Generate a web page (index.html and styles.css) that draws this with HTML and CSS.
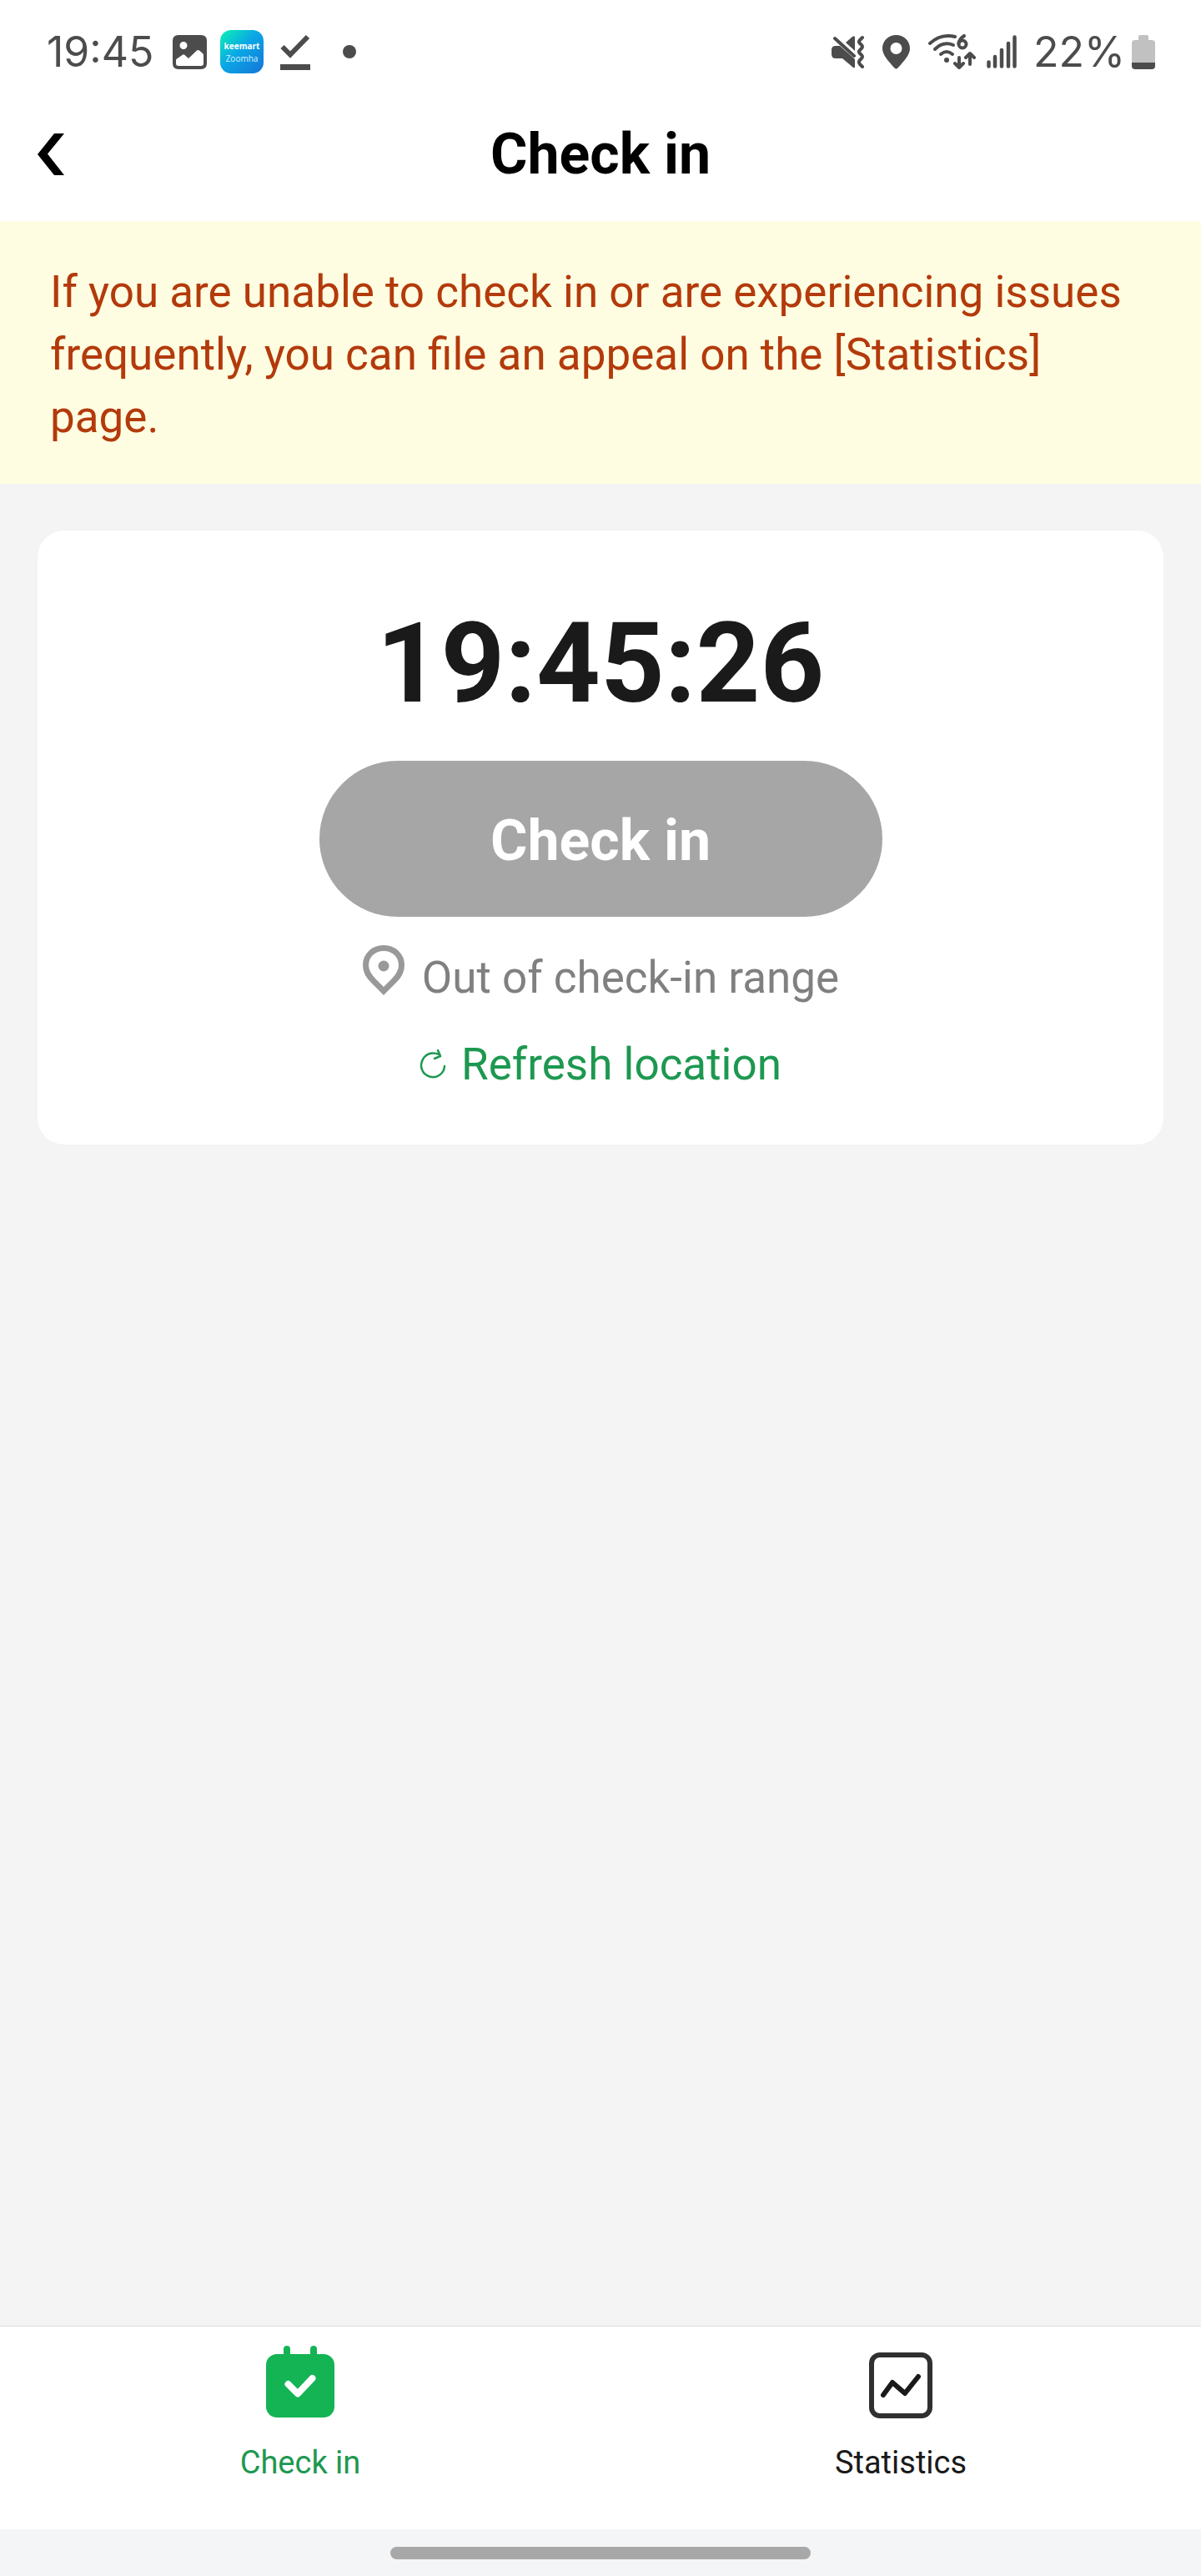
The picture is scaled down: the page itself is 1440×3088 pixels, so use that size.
FILE: index.html
```
<!DOCTYPE html>
<html lang="en">
<head>
    <meta charset="UTF-8">
    <meta name="viewport" content="width=device-width, initial-scale=1.0">
    <title>Check in</title>
    <link rel="stylesheet" href="styles.css">
</head>
<body>

<div class="status-bar">
	<div class="status-left">
		<span class="status-time">19:45</span>
		<svg class="icon-gallery" width="41" height="41" viewBox="0 0 41 41">
			<path fill="#4c4c4c" fill-rule="evenodd" d="M7 0H34Q41 0 41 7V34Q41 41 34 41H7Q0 41 0 34V7Q0 0 7 0ZM13 8a4.5 4.5 0 1 0 0 9a4.5 4.5 0 1 0 0-9ZM4 30V34Q4 37 7 37H34Q37 37 37 34V24Q37 23 36 22L32 18.500Q30.500 17.500 29 18.500L19 28L14.500 24Q13 22.500 11.500 24L5 28.500Q4 29 4 30Z"/>
		</svg>
		<svg class="icon-app" width="52" height="52" viewBox="0 0 52 52">
			<defs>
				<linearGradient id="app-bg" x1="0" y1="0" x2="1" y2="1">
					<stop offset="0" stop-color="#0df2b4"/>
					<stop offset="0.45" stop-color="#0aa8e6"/>
					<stop offset="1" stop-color="#1474d6"/>
				</linearGradient>
			</defs>
			<rect width="52" height="52" rx="13" fill="url(#app-bg)"/>
			<text class="app-name" x="26" y="23" text-anchor="middle">keemart</text>
			<text class="app-city" x="26" y="38" text-anchor="middle">Zoomha</text>
		</svg>
		<svg class="icon-done" width="36" height="43" viewBox="0 0 36 43">
			<path d="M2.500 15L12 24.500L33 3" fill="none" stroke="#4c4c4c" stroke-width="6"/>
			<rect y="36" width="36" height="7" fill="#4c4c4c"/>
		</svg>
		<span class="dot"></span>
	</div>
	<div class="status-right">
		<svg class="icon-mute" width="40" height="40" viewBox="0 0 40 40">
			<path fill="#4c4c4c" d="M5 13H10L28 29V38Q28 40 26 39L13 28H5Q0 28 0 23V18Q0 13 5 13ZM17 9L25 2Q28 0 28 3V19Z"/>
			<path d="M4 4L27 25" stroke="#4c4c4c" stroke-width="4" stroke-linecap="round"/>
			<path d="M37 3L34 6Q32 8 34 10L36 12Q38 14 36 16L34 18Q32 20 34 22L36 24Q38 26 36 28L34 30Q32 32 34 35L37 38" fill="none" stroke="#4c4c4c" stroke-width="4" stroke-linecap="round"/>
		</svg>
		<svg class="icon-pin" width="33" height="41" viewBox="0 0 33 41">
			<path fill="#4c4c4c" fill-rule="evenodd" d="M16.500 0C26 0 33 7 33 16C33 24 26 31 18.500 39.500Q16.500 41.500 14.500 39.500C7 31 0 24 0 16C0 7 7 0 16.500 0ZM16.500 9a7 7 0 1 0 0 14a7 7 0 1 0 0-14Z"/>
		</svg>
		<svg class="icon-wifi" width="57" height="42" viewBox="0 0 57 42">
			<g fill="none" stroke="#4c4c4c" stroke-width="4" stroke-linecap="round" stroke-linejoin="round">
				<path d="M2 11Q15 -1 32 3"/>
				<path d="M8 18Q18 8 30 13"/>
				<path d="M15 24Q22 18 29 24"/>
				<path d="M43 2Q37 6 36.500 11"/>
				<circle cx="41" cy="12" r="4.500"/>
				<path d="M37 28V39M32 35L37 40L42 35" />
				<path d="M50 36V24M45 28L50 23L55 28"/>
			</g>
			<circle cx="22" cy="31" r="3" fill="#4c4c4c"/>
		</svg>
		<svg class="icon-signal" width="36" height="40" viewBox="0 0 36 40">
			<path d="M2.500 32.500V37.500M10 26V37.500M18 18V37.500M26 10V37.500M33.500 2.500V37.500" stroke="#4c4c4c" stroke-width="4.500" stroke-linecap="round"/>
		</svg>
		<span class="status-percent">22%</span>
		<svg class="icon-battery" width="28" height="41" viewBox="0 0 28 41">
			<path fill="#c1c1c1" d="M8 6V2Q8 0 10 0H18Q20 0 20 2V6H24Q28 6 28 10V33H0V10Q0 6 4 6Z"/>
			<path fill="#4c4c4c" d="M0 33H28V37Q28 41 24 41H4Q0 41 0 37Z"/>
		</svg>
	</div>
</div>

<header class="header">
	<button class="back-btn" type="button" aria-label="Back">
		<svg width="32" height="50" viewBox="0 0 32 50">
			<path d="M20 0H32L12 24.500L32 50H20L0 25Z"/>
		</svg>
	</button>
	<h1 class="title">Check in</h1>
</header>

<p class="notice">If you are unable to check in or are experiencing issues frequently, you can file an appeal on the [Statistics] page.</p>

<main class="main">
	<section class="card">
		<time class="clock">19:45:26</time>
		<button class="check-btn" type="button" disabled>Check in</button>
		<p class="range-text">
			<svg class="range-icon" width="52" height="62" viewBox="0 0 52 62">
				<path d="M26 4.500C38 4.500 47.500 13 47.500 25C47.500 33 44 38 38 44L26 56L14 44C8 38 4.500 33 4.500 25C4.500 13 14 4.500 26 4.500Z" fill="none" stroke="#999" stroke-width="7"/>
				<circle cx="26" cy="26" r="6.500" fill="#999"/>
			</svg>
			Out of check-in range
		</p>
		<button class="refresh-btn" type="button">
			<svg class="refresh-icon" width="32" height="36" viewBox="0 0 32 36" fill="none" stroke="#1d9850" stroke-width="2.500" stroke-linecap="round" stroke-linejoin="round">
				<path d="M24 6Q10 1 4 12A14 14 0 1 0 30 20"/>
				<path d="M22 1L25 8L18 11"/>
			</svg>
			Refresh location
		</button>
	</section>
</main>

<nav class="tab-bar">
	<a class="tab tab-active" href="#checkin">
		<svg width="88" height="96" viewBox="0 0 88 96">
			<path d="M28 11V24M60 11V24" stroke="#14b455" stroke-width="8" stroke-linecap="round"/>
			<rect x="3" y="17" width="82" height="76" rx="13" fill="#14b455"/>
			<path d="M29.500 53L41 64.500L58.500 46" fill="none" stroke="#fff" stroke-width="8" stroke-linecap="round" stroke-linejoin="round"/>
		</svg>
		<span>Check in</span>
	</a>
	<a class="tab" href="#statistics">
		<svg width="88" height="96" viewBox="0 0 88 96" fill="none">
			<rect x="9" y="18" width="70" height="73" rx="10" stroke="#303030" stroke-width="6"/>
			<path d="M23 66L34 51L49 64L65 44" stroke="#1a1a1a" stroke-width="6" stroke-linecap="round" stroke-linejoin="round"/>
		</svg>
		<span>Statistics</span>
	</a>
</nav>

<div class="gesture-bar">
	<span class="gesture-handle"></span>
</div>

</body>
</html>
```
FILE: styles.css
```
*{
	padding: 0;
	margin: 0;
	box-sizing: border-box;
}

body{
	font-family: Roboto, "Liberation Sans", sans-serif;
	background-color: #f4f4f4;
	color: #1a1a1a;
	min-height: 100vh;
	display: flex;
	flex-direction: column;
}

svg{
	display: block;
	flex-shrink: 0;
}

button{
	font-family: inherit;
	border: none;
	background: none;
}

/* phone status bar */
.status-bar{
	height: 124px;
	padding: 0 55px 0 56px;
	background-color: #fff;
	color: #4c4c4c;
	font-family: Inter, Roboto, sans-serif;
	font-size: 50px;
	display: flex;
	justify-content: space-between;
	align-items: center;
}

.status-left,
.status-right{
	display: flex;
	align-items: center;
}

.icon-gallery{
	margin-left: 23px;
}

.icon-app{
	margin-left: 16px;
}

.app-name{
	fill: #fff;
	font-family: "Open Sans", sans-serif;
	font-size: 10px;
	font-weight: bold;
}

.app-city{
	fill: #d8f2ff;
	font-family: "Open Sans", sans-serif;
	font-size: 10px;
}

.icon-done{
	margin-left: 20px;
}

.dot{
	width: 16px;
	height: 16px;
	margin-left: 39px;
	border-radius: 50%;
	background-color: #4c4c4c;
}

.icon-pin{
	margin-left: 21px;
}

.icon-wifi{
	margin-left: 22px;
}

.icon-signal{
	margin-left: 13px;
}

.status-percent{
	margin-left: 20px;
}

.icon-battery{
	margin-left: 8px;
}

/* header */
.header{
	height: 141px;
	padding: 0 45px 20px;
	background-color: #fff;
	color: #000;
	display: grid;
	grid-template-columns: 1fr auto 1fr;
	align-items: center;
}

.back-btn{
	width: 32px;
}

.title{
	font-size: 68px;
	line-height: 80px;
	font-weight: bold;
}

.notice{
	padding: 48px 60px 42px;
	background-color: #fffde1;
	color: #b33a0b;
	font-size: 53px;
	line-height: 75px;
}

.main{
	flex: 1;
	padding: 56px 45px;
}

.card{
	padding: 90px 45px 56px;
	border-radius: 32px;
	background-color: #fff;
	display: flex;
	flex-direction: column;
	align-items: center;
}

.clock{
	font-size: 134px;
	line-height: 140px;
	font-weight: bold;
}

.check-btn{
	width: 675px;
	max-width: 100%;
	height: 187px;
	padding-top: 4px;
	margin-top: 46px;
	border-radius: 94px;
	background-color: #a6a6a6;
	color: #fff;
	font-size: 68px;
	font-weight: bold;
}

.range-text{
	margin-top: 33px;
	color: #808080;
	font-size: 53px;
	line-height: 80px;
	display: flex;
	gap: 20px;
}

.refresh-btn{
	margin-top: 24px;
	color: #1d9850;
	font-size: 53px;
	line-height: 80px;
	display: flex;
	align-items: center;
	gap: 18px;
}

/* bottom tabs */
.tab-bar{
	height: 244px;
	padding-top: 16px;
	border-top: 1px solid #ddd;
	background-color: #fff;
	display: flex;
}

.tab{
	flex: 1;
	color: #1a1a1a;
	font-size: 38px;
	line-height: 50px;
	text-decoration: none;
	display: flex;
	flex-direction: column;
	align-items: center;
	gap: 26px;
}

.tab-active{
	color: #1d9850;
}

.gesture-bar{
	height: 56px;
	padding-top: 21px;
	background-color: #f4f5f6;
	display: flex;
	justify-content: center;
}

.gesture-handle{
	width: 35%;
	height: 15px;
	border-radius: 8px;
	background-color: #a8a8a8;
}
```
